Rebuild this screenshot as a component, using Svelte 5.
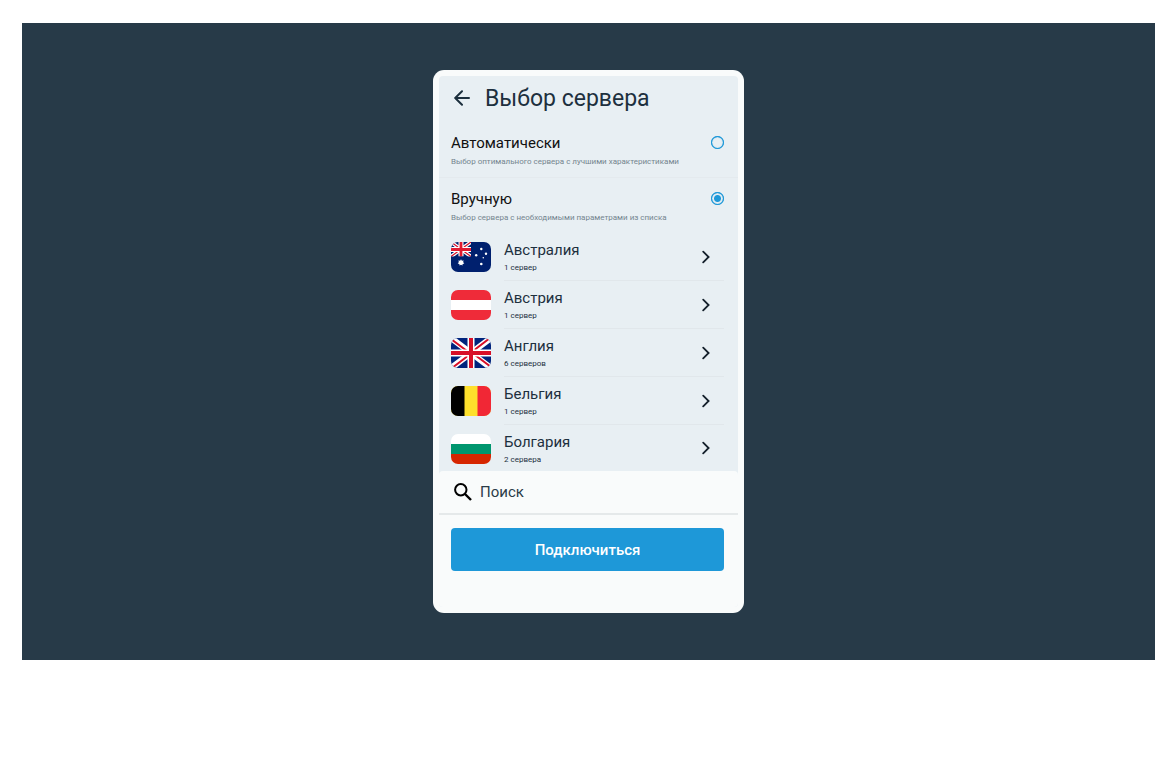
<script lang="ts">
  type Server = { id: string; name: string; note: string };

  const servers: Server[] = [
    { id: 'au', name: 'Австралия', note: '1 сервер' },
    { id: 'at', name: 'Австрия', note: '1 сервер' },
    { id: 'gb', name: 'Англия', note: '6 серверов' },
    { id: 'be', name: 'Бельгия', note: '1 сервер' },
    { id: 'bg', name: 'Болгария', note: '2 сервера' },
  ];

  const modes = [
    { id: 'auto', title: 'Автоматически', note: 'Выбор оптимального сервера с лучшими характеристиками' },
    { id: 'manual', title: 'Вручную', note: 'Выбор сервера с необходимыми параметрами из списка' },
  ];

  let mode = $state('manual');
  let query = $state('');

  const visible = $derived(servers.filter((s) => s.name.toLowerCase().includes(query.trim().toLowerCase())));
</script>

{#snippet flag(id: string)}
  <svg class="flag" viewBox="0 0 40 30" aria-hidden="true">
    {#if id === 'au'}
      <rect width="40" height="30" fill="#00206e" />
      <path d="M0 0L20 14.5M20 0L0 14.5" stroke="#fff" stroke-width="3.6" />
      <path d="M0 0L20 14.5M20 0L0 14.5" stroke="#d80f27" stroke-width="1.2" />
      <path d="M10 0V14.5M0 7.5H20" stroke="#fff" stroke-width="5" />
      <path d="M10 0V14.5M0 7.5H20" stroke="#e01a30" stroke-width="2.8" />
      <rect y="14.5" width="22" height="6" fill="#00206e" />
      <rect x="20" width="3" height="18" fill="#00206e" />
      <g fill="#fff">
        <path d="M10 17.3l.9 1.5 1.8-.4-.6 1.7 1.2 1.3-1.7.5-.1 1.7-1.5-.9-1.5.9-.1-1.7-1.7-.5 1.2-1.3-.6-1.7 1.8.4z" />
        <circle cx="30.3" cy="7" r="1.2" />
        <circle cx="25.2" cy="13.3" r="1.2" />
        <circle cx="35" cy="11.7" r="1.2" />
        <circle cx="32.3" cy="15.7" r=".8" />
        <circle cx="30.3" cy="22" r="1.3" />
      </g>
    {:else if id === 'at'}
      <rect width="40" height="30" fill="#ef2b39" />
      <rect y="10" width="40" height="10" fill="#fff" />
    {:else if id === 'gb'}
      <rect width="40" height="30" fill="#00247d" />
      <path d="M0 0L40 30M40 0L0 30" stroke="#fff" stroke-width="6" />
      <path d="M0 1L18 14.5M40 29L22 15.5M39 0L22 13M1 30L18 17" stroke="#d80f27" stroke-width="2" />
      <path d="M20 0V30M0 15H40" stroke="#fff" stroke-width="7" />
      <path d="M20 0V30M0 15H40" stroke="#d80f27" stroke-width="4" />
    {:else if id === 'be'}
      <rect width="40" height="30" fill="#fee02c" />
      <rect width="13.5" height="30" fill="#000" />
      <rect x="26.5" width="13.5" height="30" fill="#f12735" />
    {:else if id === 'bg'}
      <rect width="40" height="30" fill="#fff" />
      <rect y="10" width="40" height="10" fill="#00966e" />
      <rect y="20" width="40" height="10" fill="#d62600" />
    {/if}
  </svg>
{/snippet}

<main class="stage">
  <div class="phone">
    <div class="screen">
      <header>
        <button type="button" class="back" aria-label="Назад">
          <svg width="16" height="16" viewBox="0 0 16 16" fill="none" stroke="currentColor" stroke-width="2">
            <path d="M15 8H2M8 1.2L1.2 8 8 14.8" stroke-linejoin="round" stroke-linecap="round" />
          </svg>
        </button>
        <h1>Выбор сервера</h1>
      </header>

      <div class="modes">
        {#each modes as m (m.id)}
          <label class="mode">
            <span class="mtext">
              <span class="mtitle">{m.title}</span>
              <span class="mnote">{m.note}</span>
            </span>
            <input type="radio" name="mode" value={m.id} bind:group={mode} />
          </label>
        {/each}
      </div>

      <ul>
        {#each visible as s (s.id)}
          <li>
            <button type="button" class="server">
              {@render flag(s.id)}
              <span class="info">
                <span class="stext">
                  <span class="sname">{s.name}</span>
                  <span class="snote">{s.note}</span>
                </span>
                <svg class="chevron" width="8" height="14" viewBox="0 0 8 14" fill="none" stroke="currentColor" stroke-width="1.8">
                  <path d="M1.2 1.6L6.6 7l-5.4 5.4" stroke-linecap="round" />
                </svg>
              </span>
            </button>
          </li>
        {/each}
      </ul>

      <div class="footer">
        <label class="search">
          <svg width="18" height="18" viewBox="0 0 18 18" fill="none" stroke="#000" stroke-width="2">
            <circle cx="6.8" cy="6.8" r="5.7" />
            <path d="M11 11l6 6" stroke-width="2.4" />
          </svg>
          <input type="text" placeholder="Поиск" aria-label="Поиск" bind:value={query} />
        </label>
        <button type="button" class="connect">Подключиться</button>
      </div>
    </div>
  </div>
</main>

<style>
  :global(body) { background: #fff; }
  .stage {
    display: flex;
    justify-content: center;
    margin: 23px 21px 0 22px;
    padding: 47px 0;
    background: #273a48;
    font-family: Roboto, sans-serif;
    color: #1d303e;
  }
  .phone {
    box-sizing: border-box;
    width: 100%;
    max-width: 311px;
    padding: 6px;
    border-radius: 11px;
    background: #f9fbfb;
  }
  .screen { border-radius: 4px; background: #e8eff3; overflow: hidden; }
  button { border: 0; padding: 0; background: transparent; font-family: inherit; color: inherit; cursor: pointer; }

  header { display: flex; align-items: center; gap: 15px; height: 46px; padding: 0 15px; }
  .back { display: flex; padding-bottom: 2px; }
  h1 { margin: 0; font-size: 23px; line-height: 28px; font-weight: 400; }

  .mode {
    display: flex;
    justify-content: space-between;
    align-items: flex-start;
    height: 44px;
    padding: 11px 14px 0 12px;
    border-bottom: 1px solid #e4eaee;
    cursor: pointer;
  }
  .mode:last-child { border-bottom: 0; }
  .mtext { display: flex; flex-direction: column; gap: 4px; }
  .mtitle { font-size: 15px; line-height: 20px; color: #111; }
  .mnote { font-size: 8px; line-height: 10px; color: #74858f; white-space: nowrap; }
  .mode input {
    appearance: none;
    box-sizing: border-box;
    flex: none;
    width: 13px;
    height: 13px;
    margin: 3px 0 0;
    border: 0;
    border-radius: 50%;
    box-shadow: inset 0 0 0 1px #1e98d8, inset 0 0 1px 1px #1e98d8;
  }
  .mode input:checked { background: radial-gradient(circle, #1e98d8 3px, transparent 4px); }

  ul { margin: 0; padding: 0; list-style: none; }
  .server { display: flex; gap: 13px; width: 100%; padding: 0 14px 0 12px; text-align: left; }
  .flag { flex: none; width: 40px; height: 30px; margin-top: 9px; border-radius: 7px; }
  .info {
    display: flex;
    flex: 1;
    align-items: center;
    justify-content: space-between;
    height: 47px;
    padding-right: 14px;
    border-bottom: 1px solid #e1e7eb;
  }
  li:last-child .info { height: 46px; border-bottom: 0; }
  .stext { display: flex; flex-direction: column; gap: 3px; }
  .sname { font-size: 15px; line-height: 20px; }
  .snote { font-size: 8px; line-height: 10px; }
  .chevron { color: #14202b; }

  .footer { padding-bottom: 36px; border-radius: 4px 4px 0 0; background: #f9fbfb; }
  .search {
    display: flex;
    align-items: center;
    gap: 8px;
    height: 42px;
    padding: 0 15px;
    border-bottom: 2px solid #e5e9ea;
  }
  .search input {
    flex: 1;
    min-width: 0;
    border: 0;
    padding: 0;
    outline: 0;
    background: transparent;
    font-family: inherit;
    font-size: 15px;
    color: inherit;
  }
  .search input::placeholder { color: #2b3c48; opacity: 1; }
  .connect {
    display: block;
    width: calc(100% - 26px);
    height: 43px;
    margin: 13px 14px 0 12px;
    border-radius: 4px;
    background: #1e98d8;
    color: #fff;
    font-size: 15px;
    font-weight: 500;
  }
</style>
